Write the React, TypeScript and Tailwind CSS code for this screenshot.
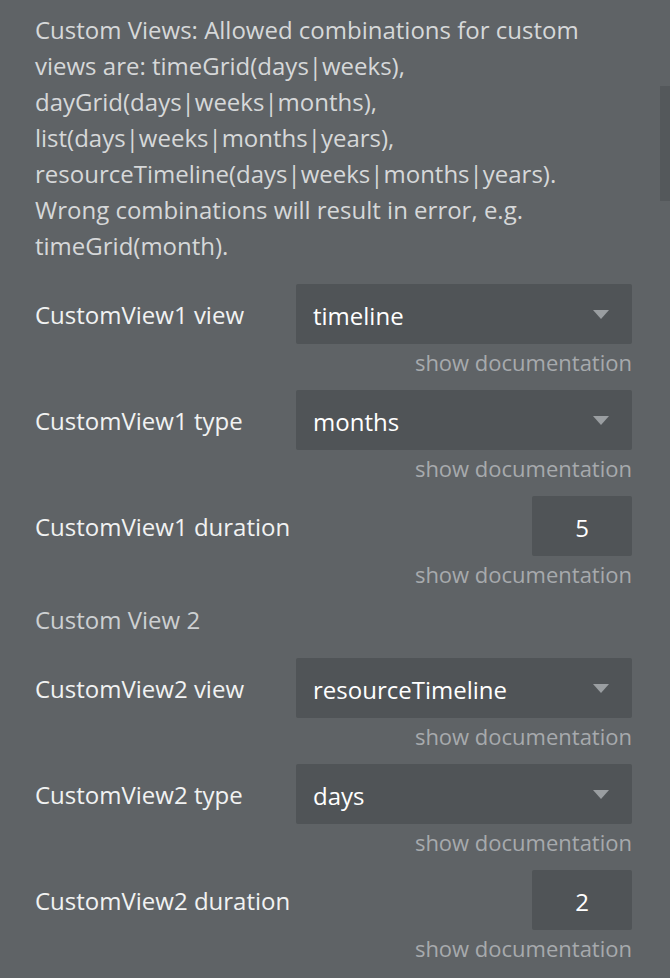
const font = { fontFamily: '"Open Sans", "Noto Sans", sans-serif' };

function Caret() {
  return (
    <svg width="16" height="9" viewBox="0 0 16 9" className="shrink-0">
      <path d="M0 0 H16 L8 9 Z" fill="#9a9ea1" />
    </svg>
  );
}

function Doc() {
  return (
    <div className="flex justify-end h-[36px] leading-[36px] text-[22px] text-[#a7aaad] mb-[10px]">
      show documentation
    </div>
  );
}

function SelectRow({ label, value }: { label: string; value: string }) {
  return (
    <div>
      <div className="flex items-center h-[60px]">
        <div className="w-[261px] text-[24px] text-[#f1f2f2] pt-[1px]">{label}</div>
        <div className="flex-1 h-[60px] rounded-[2px] bg-[#505457] flex items-center pl-[17px] pr-[23px]">
          <span className="flex-1 text-[24px] text-white pt-[3px]">{value}</span>
          <Caret />
        </div>
      </div>
      <Doc />
    </div>
  );
}

function NumberRow({ label, value }: { label: string; value: string }) {
  return (
    <div>
      <div className="flex items-center h-[60px]">
        <div className="flex-1 text-[24px] text-[#f1f2f2] pt-[1px]">{label}</div>
        <div className="w-[100px] h-[60px] rounded-[2px] bg-[#505457] flex items-center justify-center text-[24px] text-white pt-[3px]">
          {value}
        </div>
      </div>
      <Doc />
    </div>
  );
}

export default function App() {
  return (
    <div className="relative min-h-[978px] w-[670px] bg-[#5f6366] overflow-hidden" style={font}>
      <div className="absolute right-0 top-[86px] w-[10px] h-[115px] bg-[#54585b]" />
      <div className="pl-[35px] pr-[38px] pt-[12px]">
        <p className="text-[24px] leading-[36px] text-[#d6d8d9] mb-[20px]">
          Custom Views: Allowed combinations for custom
          <br />
          views are: timeGrid(days|weeks),
          <br />
          dayGrid(days|weeks|months),
          <br />
          list(days|weeks|months|years),
          <br />
          resourceTimeline(days|weeks|months|years).
          <br />
          Wrong combinations will result in error, e.g.
          <br />
          timeGrid(month).
        </p>
        <SelectRow label="CustomView1 view" value="timeline" />
        <SelectRow label="CustomView1 type" value="months" />
        <NumberRow label="CustomView1 duration" value="5" />
        <div className="h-[36px] leading-[36px] text-[24px] text-[#cdd0d2] mb-[20px]">Custom View 2</div>
        <SelectRow label="CustomView2 view" value="resourceTimeline" />
        <SelectRow label="CustomView2 type" value="days" />
        <NumberRow label="CustomView2 duration" value="2" />
      </div>
    </div>
  );
}
